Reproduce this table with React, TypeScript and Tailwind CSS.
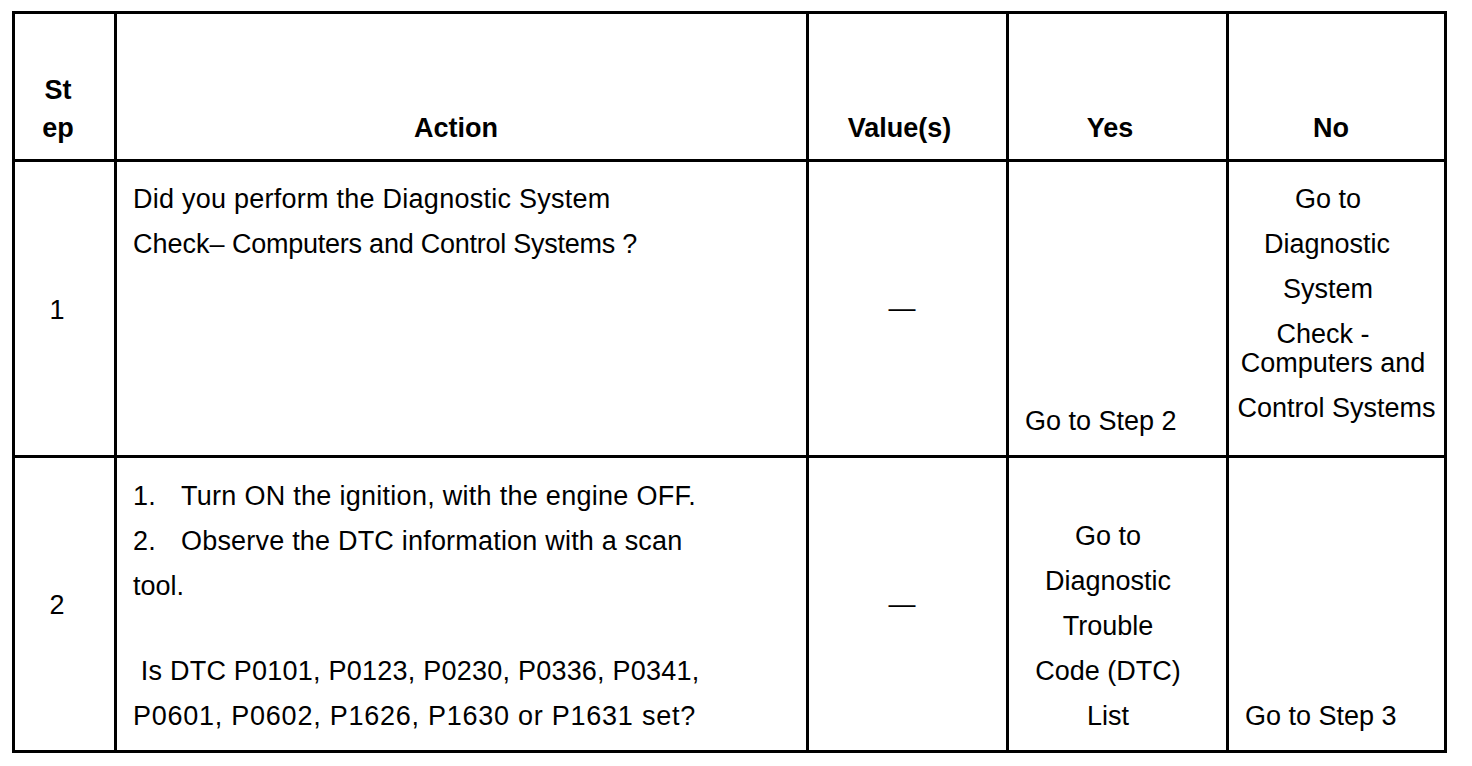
import type { ReactNode } from 'react'

const cell = 'border-r-[3px] border-b-[3px] border-black'

function Line({ children, className = '' }: { children: ReactNode; className?: string }) {
  return <div className={`h-[45px] leading-[45px] whitespace-pre ${className}`}>{children}</div>
}

function HeaderCell({ children, className = '' }: { children: ReactNode; className?: string }) {
  return (
    <div className={`${cell} flex flex-col items-center justify-end pb-[12px] font-bold leading-[38px] ${className}`}>
      {children}
    </div>
  )
}

function Dash() {
  return (
    <div className={`${cell} flex items-center justify-center pr-[11px]`}>
      <span className="leading-[45px]">—</span>
    </div>
  )
}

export default function App() {
  return (
    <div
      className="min-h-[766px] bg-white pt-[11px] pl-[12px] text-[27px] text-black"
      style={{ fontFamily: '"Liberation Sans", Arial, sans-serif' }}
    >
      <div className="grid w-fit grid-cols-[102px_692px_200px_220px_218px] grid-rows-[148px_296px_295px] border-t-[3px] border-l-[3px] border-black">
        {/* header */}
        <HeaderCell className="pr-[13px]">
          <div>St</div>
          <div>ep</div>
        </HeaderCell>
        <HeaderCell className="pr-[11px]">
          <div>Action</div>
        </HeaderCell>
        <HeaderCell className="pr-[16px]">
          <div>Value(s)</div>
        </HeaderCell>
        <HeaderCell className="pr-[15px]">
          <div>Yes</div>
        </HeaderCell>
        <HeaderCell className="pr-[11px]">
          <div>No</div>
        </HeaderCell>

        {/* step 1 */}
        <div className={`${cell} flex items-center justify-center pt-[3px] pr-[15px]`}>1</div>
        <div className={`${cell} pt-[15px] pl-[16px]`}>
          <Line className="tracking-[0.25px]">Did you perform the Diagnostic System</Line>
          <Line>
            Check– <span className="tracking-[-0.25px]">Computers and Control Systems ?</span>
          </Line>
        </div>
        <Dash />
        <div className={`${cell} flex flex-col justify-end pb-[11px] pl-[16px]`}>
          <Line>Go to Step 2</Line>
        </div>
        <div className={`${cell} flex flex-col items-center pt-[15px]`}>
          <Line className="pr-[17px]">Go to</Line>
          <Line className="pr-[19px]">Diagnostic</Line>
          <Line className="pr-[17px]">System</Line>
          <Line className="pr-[27px]">Check -</Line>
          <Line className="-mt-[16px] pr-[7px]">Computers and</Line>
          <Line>Control Systems</Line>
        </div>

        {/* step 2 */}
        <div className={`${cell} flex items-center justify-center pt-[2px] pr-[15px]`}>2</div>
        <div className={`${cell} pt-[16px] pl-[16px]`}>
          <Line className="tracking-[0.28px]">
            <span className="inline-block w-[48px]">1.</span>Turn ON the ignition, with the engine OFF.
          </Line>
          <Line className="tracking-[0.2px]">
            <span className="inline-block w-[48px]">2.</span>Observe the DTC information with a scan
          </Line>
          <Line>tool.</Line>
          <div className="h-[40px]" />
          <Line className="tracking-[0.23px]"> Is DTC P0101, P0123, P0230, P0336, P0341,</Line>
          <Line className="tracking-[0.75px]">P0601, P0602, P1626, P1630 or P1631 set?</Line>
        </div>
        <Dash />
        <div className={`${cell} flex flex-col items-center justify-end pr-[19px] pb-[11px]`}>
          <Line>Go to</Line>
          <Line>Diagnostic</Line>
          <Line>Trouble</Line>
          <Line>Code (DTC)</Line>
          <Line>List</Line>
        </div>
        <div className={`${cell} flex flex-col justify-end pb-[11px] pl-[16px]`}>
          <Line>Go to Step 3</Line>
        </div>
      </div>
    </div>
  )
}
